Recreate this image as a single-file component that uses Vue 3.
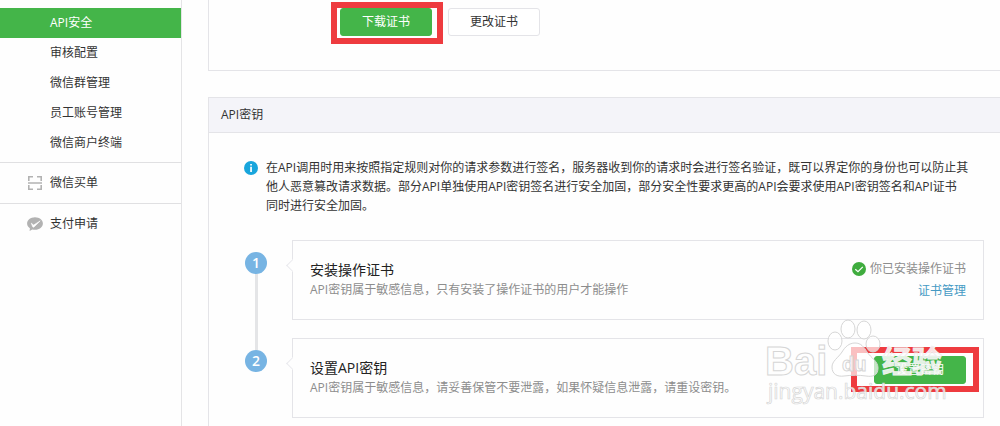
<script setup>
const subItems = [
  { label: 'API安全', active: true },
  { label: '审核配置' },
  { label: '微信群管理' },
  { label: '员工账号管理' },
  { label: '微信商户终端' },
]
const noteLines = [
  '在API调用时用来按照指定规则对你的请求参数进行签名，服务器收到你的请求时会进行签名验证，既可以界定你的身份也可以防止其',
  '他人恶意篡改请求数据。部分API单独使用API密钥签名进行安全加固，部分安全性要求更高的API会要求使用API密钥签名和API证书',
  '同时进行安全加固。',
]
</script>

<template>
  <div class="page">
    <nav class="sidebar">
      <ul class="sub">
        <li v-for="item in subItems" :key="item.label">
          <a href="#" class="sub-link" :class="{ active: item.active }">{{ item.label }}</a>
        </li>
      </ul>
      <a href="#" class="main-link">
        <svg width="16" height="16" viewBox="0 0 16 16" fill="none" stroke="#b2b2b2" stroke-width="1.6">
          <path d="M6 1.8H1.8V6M10 1.8h4.2V6M6 14.2H1.8V10M10 14.2h4.2V10M1 8h14" />
        </svg>
        <span>微信买单</span>
      </a>
      <a href="#" class="main-link">
        <svg width="16" height="16" viewBox="0 0 16 16">
          <path d="M8 1.2c4.4 0 7.9 2.8 7.9 6.3s-3.500 6.300-7.900 6.300c-1 0-1.900-.1-2.700-.4L2.600 15l.3-2.800C1.200 11.100.1 9.400.1 7.500.1 4 3.600 1.200 8 1.200z" fill="#b2b2b2" />
          <path d="M4.300 7.200l2.300 1.900 6.600-4.200-6.500 6.400-1-.5z" fill="#fff" stroke="#fff" stroke-width=".6" />
        </svg>
        <span>支付申请</span>
      </a>
    </nav>

    <main class="content">
      <section class="panel cert">
        <span class="marked"><button type="button" class="btn primary">下载证书</button></span>
        <button type="button" class="btn">更改证书</button>
      </section>

      <section class="panel">
        <h2 class="panel-title">API密钥</h2>
        <div class="panel-body">
          <div class="note">
            <svg width="14" height="14" viewBox="0 0 14 14">
              <circle cx="7" cy="7" r="7" fill="#18a5dc" />
              <path d="M6.200 3h1.700v1.600H6.200zM6.200 5.700h1.700V11H6.200z" fill="#fff" />
            </svg>
            <p><span v-for="line in noteLines" :key="line">{{ line }}</span></p>
          </div>

          <ol class="steps">
            <li class="step">
              <span class="num">1</span>
              <div class="card">
                <div class="info">
                  <h3>安装操作证书</h3>
                  <p>API密钥属于敏感信息，只有安装了操作证书的用户才能操作</p>
                </div>
                <div class="state">
                  <span class="done">
                    <svg width="14" height="14" viewBox="0 0 14 14">
                      <circle cx="7" cy="7" r="7" fill="#3fac3e" />
                      <path d="M3.300 7.200L6 9.700l4.800-4.800" fill="none" stroke="#fff" stroke-width="1.200" />
                    </svg>
                    你已安装操作证书
                  </span>
                  <a href="#">证书管理</a>
                </div>
              </div>
            </li>
            <li class="step">
              <span class="num">2</span>
              <div class="card">
                <div class="info">
                  <h3>设置API密钥</h3>
                  <p>API密钥属于敏感信息，请妥善保管不要泄露，如果怀疑信息泄露，请重设密钥。</p>
                </div>
                <span class="marked wide"><button type="button" class="btn primary">设置密钥</button></span>
                <svg class="watermark" width="190" height="90" viewBox="0 0 190 90">
                  <g fill="#fff" fill-opacity=".68" stroke="#d6d6d6" stroke-width="1">
                    <ellipse cx="76" cy="22" rx="7" ry="9" />
                    <ellipse cx="89" cy="10" rx="7" ry="9" />
                    <ellipse cx="105" cy="11" rx="7" ry="9" />
                    <ellipse cx="114" cy="25" rx="7" ry="8" />
                    <path d="M96 24c6 0 9 4 12 9 4 6 11 9 11 16 0 8-6 9-12 8-7-1-14-1-22 0-7 1-12-2-12-9 0-6 6-9 10-15 3-5 7-9 13-9z" />
                  </g>
                  <g class="brand">
                    <text x="6" y="56" font-size="40">Bai</text>
                    <text x="83" y="52" font-size="20">du</text>
                    <text class="cn" x="123" y="53" font-size="30">经验</text>
                  </g>
                  <text class="site" x="9" y="80" font-size="21">jingyan.baidu.com</text>
                </svg>
              </div>
            </li>
          </ol>
        </div>
      </section>
    </main>
  </div>
</template>

<style>
body {
  margin: 0;
  background: #fefefe;
  overflow: hidden;
}
</style>

<style scoped>
.page {
  display: flex;
  min-height: 100vh;
  font: 12px/20px "Open Sans", "Noto Sans CJK SC", sans-serif;
  color: #333;
}
ul, ol, h2, h3, p {
  margin: 0;
  padding: 0;
  list-style: none;
  font-weight: 400;
}
a { text-decoration: none; }
svg { flex: none; }
.sidebar {
  flex: none;
  width: 181px;
  padding-top: 8px;
  border-right: 1px solid #e4e4e6;
}
.sub { padding-bottom: 4px; }
.sub-link {
  display: block;
  padding-left: 50px;
  line-height: 30px;
  color: #333;
}
.sub-link.active {
  background: #44b549;
  color: #fff;
}
.main-link {
  display: flex;
  align-items: center;
  gap: 7px;
  height: 40px;
  padding-left: 27px;
  border-top: 1px solid #e0e0e2;
  color: #333;
}
.content {
  flex: 1;
  min-width: 0;
  padding-left: 26px;
}
.panel {
  border: 1px solid #e4e4e8;
  border-right: 0;
}
.cert {
  display: flex;
  gap: 16px;
  border-top: 0;
  padding: 8px 0 34px 131px;
  margin-bottom: 26px;
}
.btn {
  box-sizing: border-box;
  width: 92px;
  height: 28px;
  padding: 0;
  border: 1px solid #e4e4e8;
  border-radius: 3px;
  background: #fff;
  color: #333;
  font: inherit;
}
.btn.primary {
  border-color: #44b549;
  background: #44b549;
  color: #fff;
}
.marked {
  position: relative;
  display: flex;
}
.marked::after {
  content: "";
  position: absolute;
  inset: -6px -11px -8px -9px;
  border: 6px solid #ee3b3f;
}
.card .marked { margin-bottom: 16px; }
.marked.wide::after { inset: -9px -13px -8px -23px; }
.panel-title {
  padding-left: 12px;
  border-bottom: 1px solid #e4e4e8;
  background: #f4f4f9;
  font-size: 12px;
  line-height: 34px;
}
.panel-body { padding: 25px 16px 24px 35px; }
.note {
  display: flex;
  gap: 8px;
  margin-bottom: 25px;
}
.note svg { margin-top: 3px; }
.note p {
  line-height: 19px;
  white-space: nowrap;
}
.note span { display: block; }
.steps {
  display: grid;
  gap: 18px;
}
.step {
  position: relative;
  display: flex;
  align-items: flex-start;
  gap: 25px;
}
.num {
  flex: none;
  width: 22px;
  height: 22px;
  margin: 12px 0 0 1px;
  border-radius: 50%;
  background: #77b4e3;
  color: #fff;
  font-size: 14px;
  font-weight: 600;
  line-height: 22px;
  text-align: center;
}
.step:first-child::before {
  content: "";
  position: absolute;
  left: 11px;
  top: 34px;
  width: 3px;
  height: 76px;
  background: #e4e5e7;
}
.card {
  position: relative;
  flex: 1;
  display: flex;
  align-items: center;
  justify-content: space-between;
  box-sizing: border-box;
  min-height: 80px;
  padding: 0 17px;
  border: 1px solid #e4e4e8;
}
.card::before {
  content: "";
  position: absolute;
  left: -5px;
  top: 20px;
  width: 8px;
  height: 8px;
  border: solid #e9e9ed;
  border-width: 0 0 1px 1px;
  background: #fefefe;
  transform: rotate(45deg);
}
h3 {
  font-size: 14px;
  line-height: 20px;
  color: #222;
}
.info p { color: #8d8d8d; }
.state {
  display: flex;
  flex-direction: column;
  align-items: flex-end;
  gap: 2px;
  color: #8d8d8d;
}
.state a { color: #459ac4; }
.done {
  display: flex;
  align-items: center;
  gap: 4px;
}
.watermark {
  position: absolute;
  right: 34px;
  top: -20px;
  pointer-events: none;
}
.brand text {
  font-family: "Liberation Sans", sans-serif;
  font-weight: 700;
  fill: #fff;
  fill-opacity: 0.7;
  stroke: #d6d6d6;
  stroke-width: 1;
}
.brand .cn {
  font-family: "Noto Sans CJK SC", sans-serif;
  fill-opacity: 0.85;
  stroke: #f0f0f0;
}
.site {
  font-family: "Open Sans", sans-serif;
  fill: #fff;
  fill-opacity: 0.8;
  stroke: #d6d6d6;
  stroke-width: 0.7;
}
</style>
